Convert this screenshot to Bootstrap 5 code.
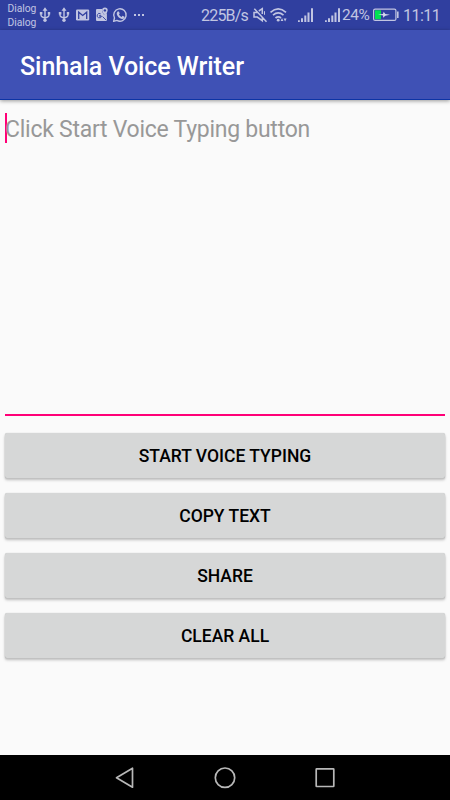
<!DOCTYPE html>
<html lang="en">
<head>
<meta charset="utf-8">
<meta name="viewport" content="width=device-width, initial-scale=1">
<title>Sinhala Voice Writer</title>
<link rel="stylesheet" href="https://cdn.jsdelivr.net/npm/bootstrap@5.3.0/dist/css/bootstrap.min.css">
<style>
body{font-family:Roboto,"Liberation Sans",sans-serif;background:#fafafa;height:800px;overflow:hidden}
.status-bar{height:30px;background:#303f9f;color:#c1c5e2}
.status-bar svg{height:30px;display:block;flex:none}
.carrier{width:38px;padding-left:7.5px;font-size:10.3px;letter-spacing:-.05px;line-height:14px;padding-top:2px}
.st{font-size:16px;line-height:32px;white-space:nowrap;flex:none}
.rate{width:50px;letter-spacing:-.8px}.pct{width:30px;font-size:15.4px;letter-spacing:-.4px;line-height:30px}.clock{width:47px;letter-spacing:-.5px}
.app-bar{height:70px;background:#3f51b5;border-bottom:1px solid #0d34a5;box-shadow:0 1px 4px rgba(0,0,0,.4);padding:4px 20px 0}
.app-title{font-size:25px;letter-spacing:-.06px;font-weight:500;line-height:1}
.editor{height:303px;margin:13px 5px 0;border-bottom:2px solid #ff0077}
.hint{height:30px;border-left:2px solid #ff0077;color:#989898;font-size:23px;letter-spacing:-.26px;line-height:33px}
.hint span{margin-left:-2px}
.actions{padding:17px 5px 0;gap:15px}
.btn-action{height:45px;background:#d6d7d7;color:#000;border:0;border-radius:2px;font-size:17.5px;font-weight:500;line-height:45px;padding:1px 0 0;box-shadow:0 0 1px rgba(0,0,0,.2),0 1px 1px #c6c6c6,0 2px 3px rgba(0,0,0,.25)}
.btn-action:hover{background:#cccdcd}
.nav-keys{height:45px;background:#000;padding:0 75px}
</style>
</head>
<body class="d-flex flex-column">
<header>
 <div class="status-bar d-flex justify-content-between">
  <div class="d-flex">
   <div class="carrier">Dialog<br>Dialog</div>
   <svg width="19" viewBox="38 0 19 30" fill="none" stroke="currentColor" stroke-width="1.4"><g id="usb"><path d="M45 9V20M41 13v2q0 2 4 3M49 13v2q0 2-4 3"/><path d="M45 7.3l2.500 3.400h-5zM39.800 12h2.600v2.600h-2.600zM47.800 12h2.400v2.600h-2.400z" fill="currentColor" stroke="none"/><circle cx="45" cy="20.3" r="1.700" fill="currentColor" stroke="none"/></g></svg>
   <svg width="18" viewBox="38 0 18 30" fill="none" stroke="currentColor" stroke-width="1.4"><use href="#usb"/></svg>
   <svg width="18" viewBox="75 0 18 30"><rect x="76" y="9.5" width="13.2" height="11" rx="1.2" fill="currentColor"/><path d="M78.7 19v-6.800l4 3.300 4-3.300V19" fill="none" stroke="#303f9f" stroke-width="1.3"/></svg>
   <svg width="18" viewBox="93 0 18 30"><path d="M97 9h5.200q-.7 3.300 2 6l1.700-1.700 1 .2V20q0 1-1 1H97q-1 0-1-1V10q0-1 1-1z" fill="currentColor"/><path d="M101 15.800h-2M100.700 13.900a2.200 2.200 0 1 0 .8 2.200h-2M102.500 16.500l3.500 3.500" fill="none" stroke="#303f9f" stroke-width=".9"/><path d="M104.900 7.600a2.800 2.800 0 0 1 2.800 2.800q0 1.700-2.800 4.900-2.800-3.200-2.800-4.900a2.800 2.800 0 0 1 2.800-2.800z" fill="currentColor"/><circle cx="104.900" cy="10.400" r="1.200" fill="#303f9f"/></svg>
   <svg width="20" viewBox="111 0 20 30"><path d="M113.600 21.400l.9-3.400a6.200 6.200 0 1 1 2.400 2.400z" fill="none" stroke="currentColor" stroke-width="1.400" stroke-linejoin="round"/><path d="M117.600 11.500h1.300l.8 2-.8 1q.9 1.700 2.700 2.400l.9-1.100 2 1v1.200q-1 1.300-2.700 1-4-1.200-5.100-5-.1-1.500.9-2.500z" fill="currentColor"/></svg>
   <svg width="19" viewBox="131 0 19 30" fill="currentColor"><path d="M134 14h2v2h-2zM138 14h2v2h-2zM142 14h2v2h-2z"/></svg>
  </div>
  <div class="d-flex">
   <span class="st rate">225B/s</span>
   <svg width="18" viewBox="251 0 18 30" fill="none" stroke="currentColor" stroke-width="1.5"><path d="M257.500 12.400H254v4.700h3.300l5 3.600v-3M258.800 11l3.500-2.300v5.200M254.300 8.700l12.200 13"/><path d="M264.500 11.200v3.600" stroke-width="1"/></svg>
   <svg width="26" viewBox="269 0 26 30" fill="none" stroke="currentColor" stroke-width="1.700"><path d="M270.500 12.300q7.700-6.700 15.500 0M273 15.200q5.200-4.500 10.500 0M275.500 18q2.800-2.400 5.500 0"/><circle cx="278.200" cy="20.200" r="1.400" fill="currentColor" stroke="none"/><path d="M280.600 21l1.400-3 1.400 3zM283.600 18.600h3l-1.500 2.800z" fill="currentColor" stroke="none"/></svg>
   <svg width="27" viewBox="295 0 27 30" fill="currentColor"><g id="signal"><path d="M298 20.200h1.800V22H298zM301 18.200h2V22h-2zM304.300 15.500h2V22h-2zM307.500 12.500h2V22h-2zM311 8.300h2V22h-2z"/></g></svg>
   <svg width="20" viewBox="295 0 20 30" fill="currentColor"><use href="#signal"/></svg>
   <span class="st pct">24%</span>
   <svg width="31" viewBox="372 0 31 30"><rect x="373.600" y="9.100" width="22.300" height="11.300" rx="1.500" fill="none" stroke="currentColor" stroke-width="1.200"/><path d="M397 11.500h1.600v6.500H397z" fill="currentColor"/><path d="M375 10.300h6v8.900h-6z" fill="#00e052"/><path d="M378 14.600l5-.7.700-2.100 1.600 2.300 4.700.7-4.700.9-2.300 2 .2-2.200z" fill="#d5d8ee"/></svg>
   <span class="st clock">11:11</span>
  </div>
 </div>
 <div class="app-bar d-flex align-items-center position-relative"><h1 class="app-title text-white m-0">Sinhala Voice Writer</h1></div>
</header>
<main class="flex-grow-1">
 <div class="editor"><div class="hint"><span>Click Start Voice Typing button</span></div></div>
 <div class="actions d-grid">
  <button class="btn btn-action" type="button">START VOICE TYPING</button>
  <button class="btn btn-action" type="button">COPY TEXT</button>
  <button class="btn btn-action" type="button">SHARE</button>
  <button class="btn btn-action" type="button">CLEAR ALL</button>
 </div>
</main>
<nav class="nav-keys d-flex justify-content-around align-items-center" aria-label="System navigation">
 <svg width="26" height="26" viewBox="0 0 26 26" fill="none" stroke="#b8b8b8" stroke-width="1.700"><path d="M4.500 12.700l16-9.500v19z" stroke-linejoin="round"/></svg>
 <svg width="26" height="26" viewBox="0 0 26 26" fill="none" stroke="#b8b8b8" stroke-width="1.700"><circle cx="13" cy="12.700" r="9.700"/></svg>
 <svg width="26" height="26" viewBox="0 0 26 26" fill="none" stroke="#b8b8b8" stroke-width="1.700"><rect x="4.200" y="3.900" width="17.600" height="17.600" rx=".5"/></svg>
</nav>
<script src="https://cdn.jsdelivr.net/npm/bootstrap@5.3.0/dist/js/bootstrap.bundle.min.js"></script>
</body>
</html>
